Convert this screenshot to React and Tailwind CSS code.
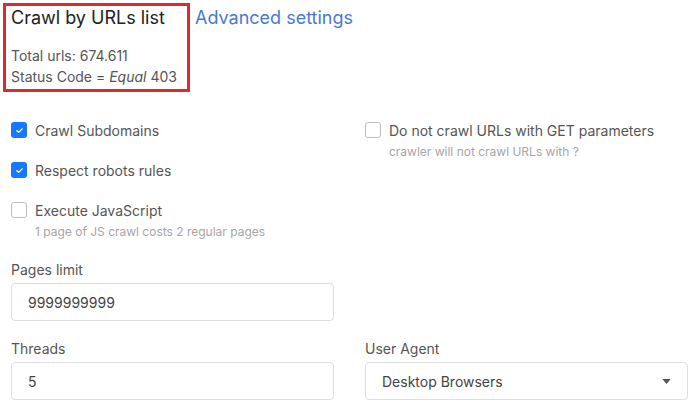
import React from "react";

function Check({ checked }) {
  return checked ? (
    <span className="flex h-4 w-4 shrink-0 items-center justify-center rounded-[3px] bg-[#1677ff]">
      <svg viewBox="0 0 12 12" className="h-[9px] w-[9px]">
        <path d="M2.5 6.2 L5 8.5 L9.5 3.8" fill="none" stroke="#fff" strokeWidth="1.8" strokeLinecap="round" strokeLinejoin="round" />
      </svg>
    </span>
  ) : (
    <span className="h-4 w-4 shrink-0 rounded-[3px] border border-[#bdbdbd] bg-white" />
  );
}

function CheckRow({ checked, label, hint }) {
  return (
    <div className="flex flex-col">
      <div className="flex h-[20px] items-center gap-[8px]">
        <Check checked={checked} />
        <span className="text-[14px] text-[#555]">{label}</span>
      </div>
      {hint && <div className="mt-[3px] pl-[24px] text-[12px] text-[#a6a6a6]">{hint}</div>}
    </div>
  );
}

function Field({ label, children }) {
  return (
    <div className="flex flex-col">
      <div className="mb-[3px] text-[14px] leading-[20px] text-[#555]">{label}</div>
      {children}
    </div>
  );
}

export default function App() {
  return (
    <div className="min-h-[411px] bg-white pl-[11px] pr-[5px] pt-[3px]" style={{ fontFamily: "Inter, 'Noto Sans', sans-serif" }}>
      <div className="flex items-start">
        <div className="-ml-[8px] h-[89px] w-[187px] border-[3px] border-[#dc2a30] pl-[5px]">
          <div className="text-[18px] leading-[24px] text-[#222]">Crawl by URLs list</div>
          <div className="mt-[15px] text-[14px] leading-[21px] text-[#555]">Total urls: 674.611</div>
          <div className="text-[14px] leading-[21px] text-[#555]">
            Status Code = <i>Equal</i> 403
          </div>
        </div>
        <div className="ml-[5px] pt-[3px] text-[18px] leading-[24px] text-[#4a78d8]">Advanced settings</div>
      </div>

      <div className="mt-[28px] grid grid-cols-[323px_323px] gap-x-[31px]">
        <div className="flex flex-col gap-[20px]">
          <CheckRow checked label="Crawl Subdomains" />
          <CheckRow checked label="Respect robots rules" />
          <CheckRow label="Execute JavaScript" hint="1 page of JS crawl costs 2 regular pages" />
        </div>
        <div className="flex flex-col">
          <CheckRow label="Do not crawl URLs with GET parameters" hint="crawler will not crawl URLs with ?" />
        </div>
      </div>

      <div className="mt-[19px] grid grid-cols-[323px_323px] gap-x-[31px] gap-y-[18px]">
        <Field label="Pages limit">
          <div className="flex h-[38px] items-center rounded-[4px] border border-[#dedede] px-[16px] text-[14px] text-[#444]">9999999999</div>
        </Field>
        <div />
        <Field label="Threads">
          <div className="flex h-[38px] items-center rounded-[4px] border border-[#dedede] px-[16px] text-[14px] text-[#444]">5</div>
        </Field>
        <Field label="User Agent">
          <div className="flex h-[38px] items-center justify-between rounded-[4px] border border-[#dedede] pl-[16px] pr-[16px] text-[14px] text-[#444]">
            <span>Desktop Browsers</span>
            <svg viewBox="0 0 10 6" className="h-[5px] w-[9px]">
              <path d="M0 0 L10 0 L5 6 Z" fill="#555" />
            </svg>
          </div>
        </Field>
      </div>
    </div>
  );
}
